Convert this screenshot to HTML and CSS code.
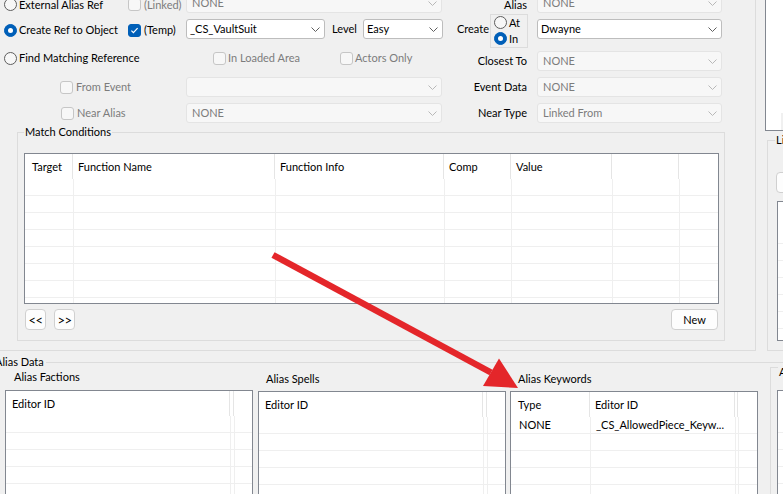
FILE: index.html
```html
<!DOCTYPE html>
<html>
<head>
<meta charset="utf-8">
<title>Alias</title>
<link rel="stylesheet" href="styles.css">
</head>
<body>
<div class="upper">
  <div class="main">
    <div class="form">
      <div class="row r1">
        <div class="c1">
          <span class="opt"><i class="radio"></i><span>External Alias Ref</span></span>
          <i class="check dis"></i><span class="dim">(Linked)</span>
        </div>
        <div class="c2">
          <div class="combo dis w256"><span>NONE</span><svg width="9" height="5" viewBox="0 0 9 5"><path d="M0.5 0.5L4.5 4.5L8.5 0.5" fill="none" stroke="#b8b8b8"/></svg></div>
        </div>
        <div class="c3">Alias</div>
        <div class="c4">
          <div class="combo dis w185"><span>NONE</span><svg width="9" height="5" viewBox="0 0 9 5"><path d="M0.5 0.5L4.5 4.5L8.5 0.5" fill="none" stroke="#b8b8b8"/></svg></div>
        </div>
      </div>

      <div class="row r2">
        <div class="c1">
          <span class="opt"><i class="radio on"></i><span>Create Ref to Object</span></span>
          <i class="check on"><svg width="11" height="11" viewBox="0 0 11 11"><path d="M2.4 5.7L4.4 7.7L8.6 3.2" fill="none" stroke="#fff" stroke-width="1.2"/></svg></i><span>(Temp)</span>
        </div>
        <div class="c2">
          <div class="combo w139"><span>_CS_VaultSuit</span><svg width="9" height="5" viewBox="0 0 9 5"><path d="M0.5 0.5L4.5 4.5L8.5 0.5" fill="none" stroke="#5f5f5f"/></svg></div>
          <span class="lvl">Level</span>
          <div class="combo w80 push"><span>Easy</span><svg width="9" height="5" viewBox="0 0 9 5"><path d="M0.5 0.5L4.5 4.5L8.5 0.5" fill="none" stroke="#5f5f5f"/></svg></div>
        </div>
        <div class="c3 create">
          <span>Create</span>
          <div class="rgroup">
            <div class="ropt"><i class="radio"></i><span>At</span></div>
            <div class="ropt"><i class="radio on"></i><span>In</span></div>
          </div>
        </div>
        <div class="c4">
          <div class="combo w185"><span>Dwayne</span><svg width="9" height="5" viewBox="0 0 9 5"><path d="M0.5 0.5L4.5 4.5L8.5 0.5" fill="none" stroke="#5f5f5f"/></svg></div>
        </div>
      </div>

      <div class="row r3">
        <div class="c1">
          <span class="opt"><i class="radio"></i><span>Find Matching Reference</span></span>
        </div>
        <div class="c2 flags">
          <span class="cb first"><i class="check dis"></i><span class="dim">In Loaded Area</span></span>
          <span class="cb"><i class="check dis"></i><span class="dim">Actors Only</span></span>
        </div>
        <div class="c3">Closest To</div>
        <div class="c4">
          <div class="combo dis w185"><span>NONE</span><svg width="9" height="5" viewBox="0 0 9 5"><path d="M0.5 0.5L4.5 4.5L8.5 0.5" fill="none" stroke="#b8b8b8"/></svg></div>
        </div>
      </div>

      <div class="row r4">
        <div class="c1 ind60">
          <i class="check dis"></i><span class="dim">From Event</span>
        </div>
        <div class="c2">
          <div class="combo dis w256"><span></span><svg width="9" height="5" viewBox="0 0 9 5"><path d="M0.5 0.5L4.5 4.5L8.5 0.5" fill="none" stroke="#b8b8b8"/></svg></div>
        </div>
        <div class="c3">Event Data</div>
        <div class="c4">
          <div class="combo dis w185"><span>NONE</span><svg width="9" height="5" viewBox="0 0 9 5"><path d="M0.5 0.5L4.5 4.5L8.5 0.5" fill="none" stroke="#b8b8b8"/></svg></div>
        </div>
      </div>

      <div class="row r5">
        <div class="c1 ind61">
          <i class="check dis"></i><span class="dim">Near Alias</span>
        </div>
        <div class="c2">
          <div class="combo dis w256"><span>NONE</span><svg width="9" height="5" viewBox="0 0 9 5"><path d="M0.5 0.5L4.5 4.5L8.5 0.5" fill="none" stroke="#b8b8b8"/></svg></div>
        </div>
        <div class="c3">Near Type</div>
        <div class="c4">
          <div class="combo dis w185"><span>Linked From</span><svg width="9" height="5" viewBox="0 0 9 5"><path d="M0.5 0.5L4.5 4.5L8.5 0.5" fill="none" stroke="#b8b8b8"/></svg></div>
        </div>
      </div>
    </div>

    <div class="mc">
      <span class="gtitle">Match Conditions</span>
      <div class="lv mclist">
        <div class="lvh">
          <div class="m1h">Target</div>
          <div class="m2h">Function Name</div>
          <div class="m3h">Function Info</div>
          <div class="m4h">Comp</div>
          <div class="m5h">Value</div>
          <div class="m6h"></div>
        </div>
        <div class="lvb">
          <div class="m1"></div><div class="m2"></div><div class="m3"></div><div class="m4"></div><div class="m5"></div><div class="m6"></div><div class="fill"></div>
        </div>
      </div>
      <div class="btnrow">
        <button class="btn sq">&lt;&lt;</button>
        <button class="btn sq">&gt;&gt;</button>
        <button class="btn new">New</button>
      </div>
    </div>
  </div>

  <div class="side">
    <div class="slv"><div class="sgrip"></div></div>
    <div class="sgroup">
      <span class="gtitle">Linked</span>
      <div class="sbtn"></div>
      <div class="lv slist">
        <div class="lvh"></div>
        <div class="lvb"><div class="fill"></div></div>
      </div>
    </div>
  </div>
</div>

<div class="aliasdata">
  <span class="adtitle">Alias Data</span>
  <div class="panels">
    <div class="panel p1">
      <div class="plabel">Alias Factions</div>
      <div class="lv blist">
        <div class="lvh"><div class="e1h">Editor ID</div><div class="e2h"></div></div>
        <div class="lvb"><div class="e1"></div><div class="e2"></div><div class="fill"></div></div>
      </div>
    </div>
    <div class="panel p2">
      <div class="plabel">Alias Spells</div>
      <div class="lv blist">
        <div class="lvh"><div class="e1h">Editor ID</div><div class="e2h"></div></div>
        <div class="lvb"><div class="e1"></div><div class="e2"></div><div class="fill"></div></div>
      </div>
    </div>
    <div class="panel p3">
      <div class="plabel">Alias Keywords</div>
      <div class="lv blist">
        <div class="lvh"><div class="k1h">Type</div><div class="k2h">Editor ID</div><div class="k3h"></div></div>
        <div class="lvb">
          <div class="k1"><div class="cell pk1">NONE</div></div>
          <div class="k2"><div class="cell pk2">_CS_AllowedPiece_Keyw...</div></div>
          <div class="k3"></div>
          <div class="fill"></div>
        </div>
      </div>
    </div>
    <div class="p4">
      <span class="gtitle">Alias</span>
      <div class="lv plist">
        <div class="lvh"></div>
        <div class="lvb"><div class="fill"></div></div>
      </div>
    </div>
  </div>
</div>

<svg class="arrow" width="783" height="494" viewBox="0 0 783 494">
  <line x1="273" y1="255" x2="491" y2="372.5" stroke="#e4262a" stroke-width="6.5"/>
  <polygon points="483,386 499,358.5 518,388" fill="#e4262a"/>
</svg>
</body>
</html>
```
FILE: styles.css
```css
* { box-sizing: border-box; }
html, body { margin: 0; padding: 0; }
body {
  width: 783px;
  height: 494px;
  overflow: hidden;
  position: relative;
  background: #f0f0f0;
  font-family: Lato, "Noto Sans", sans-serif;
  font-size: 11px;
  line-height: 14px;
  color: #000;
}
i { font-style: normal; }

/* ---------- upper area ---------- */
.upper { display: flex; align-items: flex-start; height: 351px; }
.main {
  flex: none;
  width: 756px;
  height: 351px;
  border-right: 1px solid #dcdcdc;
  border-bottom: 1px solid #dcdcdc;
}
.form { margin-top: -10px; }
.row {
  display: grid;
  grid-template-columns: 186px 257px 94px 186px;
  grid-template-rows: 26px;
  height: 26px;
  align-items: center;
  white-space: nowrap;
}
.row.r3 { margin-top: 6px; }
.c1 { display: flex; align-items: center; padding-left: 4px; height: 26px; }
.c1.ind60 { padding-left: 60px; }
.c1.ind61 { padding-left: 61px; }
.c2 { display: flex; align-items: center; height: 26px; }
.c3 { text-align: right; padding-right: 10px; }
.c4 { display: flex; align-items: center; }

/* small vertical nudges seen in the dialog */
.r1 .c1, .r1 .c3 { margin-top: 3px; }
.r3 .c1, .r3 .flags { margin-top: -6px; }
.r2 .c1 { margin-top: 2px; }

.opt { display: flex; align-items: center; gap: 2px; width: 124px; flex: none; }
.radio {
  flex: none;
  width: 13px; height: 13px;
  border-radius: 50%;
  border: 1px solid #5e5e5e;
  background: #f7f7f7;
  display: flex; align-items: center; justify-content: center;
}
.radio.on { background: #005fb8; border-color: #005fb8; }
.radio.on::after { content: ""; width: 5px; height: 5px; border-radius: 50%; background: #fff; }

.check {
  flex: none;
  width: 13px; height: 13px;
  border: 1px solid #c6c6c6;
  border-radius: 3px;
  background: #f7f7f7;
  margin-right: 3px;
  display: flex; align-items: center; justify-content: center;
}
.check.on { background: #005fb8; border-color: #005fb8; }
.dim { color: #7c7c7c; }

.flags { padding-left: 27px; }
.cb { display: flex; align-items: center; }
.cb .check { margin-right: 2px; }
.cb.first { width: 127px; flex: none; }

.combo {
  flex: none;
  height: 20px;
  display: flex; align-items: center; justify-content: space-between;
  border: 1px solid #bdbdbd;
  border-radius: 3px;
  background: #fff;
  padding: 0 4px 0 3px;
  white-space: nowrap;
}
.combo.dis { background: #f7f7f7; border-color: #e4e4e4; color: #7c7c7c; padding-left: 5px; }
.combo svg { flex: none; }
.w256 { width: 256px; }
.w185 { width: 185px; }
.w139 { width: 139px; }
.w80 { width: 80px; }
.lvl { margin-left: 7px; }
.push { margin-left: auto; }

.create { display: flex; justify-content: flex-end; align-items: center; height: 26px; padding-right: 9px; }
.rgroup {
  flex: none;
  width: 38px; height: 34px;
  margin: 3px 0 0 1px;
  border: 1px solid #dcdcdc;
  padding-left: 3px;
}
.ropt { display: flex; align-items: center; gap: 2px; height: 16px; }

/* ---------- group boxes ---------- */
.gtitle {
  align-self: flex-start;
  height: 14px;
  padding: 0 1px;
  background: #f0f0f0;
  white-space: nowrap;
}
.mc {
  margin: 6px 0 0 17px;
  width: 708px;
  height: 209px;
  border: 1px solid #dcdcdc;
  display: flex;
  flex-direction: column;
}
.mc .gtitle { margin: -8px 0 0 6px; }

/* ---------- list views ---------- */
.lv {
  flex: none;
  background: #fff;
  border: 1px solid #828790;
  display: flex;
  flex-direction: column;
  overflow: hidden;
}
.lvh { display: flex; height: 25px; flex: none; }
.lvh > div {
  flex: none;
  height: 25px;
  line-height: 25px;
  border-right: 1px solid #e5e5e5;
  padding-left: 5px;
  white-space: nowrap;
  overflow: hidden;
}
.lvb {
  flex: 1;
  display: flex;
  background: repeating-linear-gradient(to bottom, transparent 0, transparent 16px, #efefef 16px, #efefef 17px);
}
.lvb > div { flex: none; border-right: 1px solid #efefef; }
.lvb > .fill { flex: 1; border-right: 0; }
.cell { height: 17px; line-height: 16px; white-space: nowrap; overflow: hidden; }

.mclist { margin: 14px 0 0 6px; width: 695px; height: 151px; }
.m1h { width: 48px; padding-left: 7px !important; }
.m2h { width: 202px; }
.m3h { width: 169px; }
.m4h { width: 67px; }
.m5h { width: 101px; }
.m6h { width: 67px; }
.m1 { width: 49px; }
.m2 { width: 202px; }
.m3 { width: 169px; }
.m4 { width: 67px; }
.m5 { width: 101px; }
.m6 { width: 67px; }

.btnrow { display: flex; gap: 8px; margin: 5px 6px 0 7px; }
.btn {
  height: 21px;
  padding: 0;
  border: 1px solid #d0d0d0;
  border-radius: 4px;
  background: #fdfdfd;
  font: inherit;
  color: #000;
  display: flex; align-items: center; justify-content: center;
}
.btn.sq { width: 21px; font-size: 13px; letter-spacing: -0.5px; }
.btn.new { width: 47px; margin-left: auto; }

/* ---------- right strip ---------- */
.side { flex: none; width: 27px; display: flex; flex-direction: column; align-items: flex-start; }
.slv {
  flex: none;
  margin-left: 9px;
  width: 30px;
  height: 131px;
  background: #fff;
  border: 1px solid #828790;
  border-top: 0;
  display: flex;
  align-items: flex-end;
  justify-content: flex-end;
}
.sgrip { width: 13px; height: 17px; background: #f0f0f0; }
.sgroup {
  flex: none;
  margin: 9px 0 0 11px;
  width: 30px;
  height: 211px;
  border: 1px solid #dcdcdc;
  border-right: 0;
  display: flex;
  flex-direction: column;
  align-items: flex-start;
}
.sgroup .gtitle { margin: -8px 0 0 7px; }
.sbtn {
  flex: none;
  margin: 25px 0 0 8px;
  width: 40px; height: 21px;
  border: 1px solid #d0d0d0;
  border-radius: 4px;
  background: #fdfdfd;
}
.slist { margin: 8px 0 0 9px; width: 40px; height: 140px; }

/* ---------- alias data ---------- */
.aliasdata {
  margin-top: 11px;
  border-top: 1px solid #dcdcdc;
  display: flex;
  flex-direction: column;
}
.adtitle {
  align-self: flex-start;
  height: 14px;
  margin: -8px 0 0 -6px;
  padding: 0 2px 0 1px;
  background: #f0f0f0;
  white-space: nowrap;
}
.panels { display: flex; align-items: flex-start; }
.panel { flex: none; width: 248px; }
.plabel { height: 14px; white-space: nowrap; }
.p1 { margin-left: 5px; }
.p1 .plabel { margin-top: 1px; padding-left: 9px; }
.p1 .lv { margin-top: 6px; }
.p2 { margin-left: 5px; }
.p3 { margin-left: 4px; }
.p2 .plabel, .p3 .plabel { margin-top: 3px; padding-left: 8px; }
.p2 .lv, .p3 .lv { margin-top: 5px; }
.blist { width: 248px; height: 140px; }

.e1h { width: 224px; padding-left: 6px !important; }
.e2h { width: 4px; padding-left: 0 !important; }
.e1 { width: 225px; }
.e2 { width: 4px; }
.k1h { width: 79px; padding-left: 7px !important; }
.k2h { width: 145px; }
.k3h { width: 3px; padding-left: 0 !important; }
.k1 { width: 80px; }
.k2 { width: 145px; }
.k3 { width: 3px; }
.pk1 { padding-left: 8px; }
.pk2 { padding-left: 5px; }

.p4 {
  flex: none;
  margin: -2px 0 0 12px;
  width: 40px;
  height: 140px;
  border-left: 1px solid #dcdcdc;
  border-top: 1px solid #dcdcdc;
  display: flex;
  flex-direction: column;
  align-items: flex-start;
}
.p4 .gtitle { margin: -3px 0 0 7px; }
.plist { margin: 11px 0 0 6px; width: 40px; height: 120px; }

/* ---------- annotation arrow ---------- */
.arrow { position: absolute; left: 0; top: 0; pointer-events: none; }
```
